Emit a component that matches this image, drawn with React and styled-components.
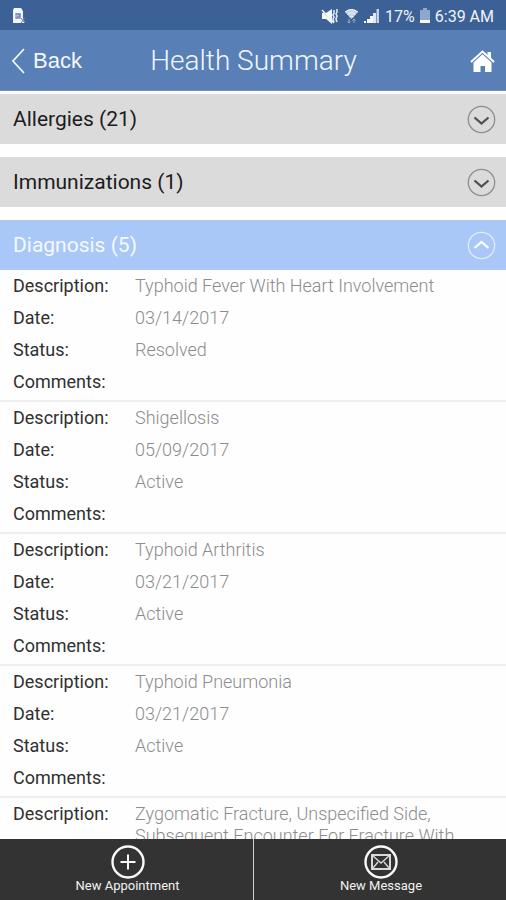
import React, { useState } from "react";
import styled, { createGlobalStyle } from "styled-components";

const GlobalStyle = createGlobalStyle`
  * { box-sizing: border-box; }
  body { margin: 0; background: #fff; font-family: Roboto, "Liberation Sans", sans-serif; }
  button { font: inherit; border: 0; background: none; padding: 0; cursor: pointer; }
`;

const Screen = styled.div`
  display: flex;
  flex-direction: column;
  height: 100vh;
  overflow: hidden;
  background: #fefefe;
`;

const StatusBar = styled.div`
  flex: none;
  display: flex;
  align-items: center;
  justify-content: space-between;
  height: 30px;
  padding: 2px 12px 0;
  background: #3b6197;
  color: #f0f4fa;
  font-size: 16px;
`;

const StatusItems = styled.div`
  display: flex;
  align-items: center;
  gap: 5px;
`;

const Header = styled.header`
  flex: none;
  display: grid;
  grid-template-columns: 1fr auto 1fr;
  align-items: center;
  height: 61px;
  padding: 2px 11px 0 12px;
  background: #5980b6;
  border-bottom: 1px solid #6f8fbf;
  color: #f2f6fc;
`;

const BackButton = styled.button`
  display: flex;
  align-items: center;
  gap: 8px;
  color: #f4f7fc;
  justify-self: start;

  && { font-family: "Liberation Sans", sans-serif; font-size: 22px; }
`;

const Title = styled.h1`
  margin: 0;
  font-size: 28px;
  font-weight: 300;
  line-height: 34px;
`;

const HomeLink = styled.a`
  display: flex;
  justify-self: end;
  color: #fff;
`;

const Content = styled.main`
  flex: 1;
  min-height: 0;
  overflow-y: auto;
  scrollbar-width: none;
  padding-top: 3px;
`;

const Section = styled.section`
  margin-bottom: 13px;
`;

const SectionButton = styled.button`
  display: flex;
  align-items: center;
  justify-content: space-between;
  width: 100%;
  height: 50px;
  padding: 0 10px 0 13px;
  background: ${(p) => (p.$open ? "#a9c8f7" : "#dbdbdb")};
  color: ${(p) => (p.$open ? "#f6f9ff" : "#1c1c1c")};

  && { font-size: 21px; }
`;

const Entry = styled.dl`
  margin: 0;
  padding: 0 13px 2px;
  border-bottom: 2px solid #efefef;
`;

const Field = styled.div`
  display: grid;
  grid-template-columns: 122px 1fr;
  padding: 5px 0;
  font-size: 18px;
  line-height: 22px;
`;

const Term = styled.dt`
  color: #303030;
`;

const Value = styled.dd`
  margin: 0;
  max-width: 340px;
  color: #8c8c8c;
  font-weight: 300;
`;

const BottomBar = styled.nav`
  flex: none;
  display: grid;
  grid-template-columns: 1fr 1fr;
  height: 61px;
  background: #333;
`;

const BottomButton = styled.button`
  display: flex;
  flex-direction: column;
  align-items: center;
  justify-content: flex-start;
  color: #f2f2f2;

  && { padding: 6px 0 0 2px; font-size: 13px; line-height: 14px; }
  & + & { border-left: 1px solid #d0d0d0; }
`;

const SimIcon = () => (
  <svg width="14" height="16" viewBox="0 0 14 16" aria-hidden="true">
    <path d="M2 0h7l2 3v7l2 5H1V2z" fill="#f2f5fa" />
    <path d="M3 5h6v6H3z" fill="#aab9d1" />
    <path d="M4 6h4v3H5v2M9 10l4 5M13 10l-4 5" stroke="#64799d" fill="none" />
  </svg>
);

const MuteIcon = () => (
  <svg width="18" height="17" viewBox="0 0 18 17" aria-hidden="true">
    <path d="M1 5h4l6-4v15l-6-5H1z" fill="#f3f6fb" />
    <path d="M0 2l13 13" stroke="#3b6197" strokeWidth="1" />
    <path d="M1 2l12 13" stroke="#f3f6fb" strokeWidth="1.500" />
    <path d="M13 2v3l-1 2 1 2-1 2 1 3M16 1v3l-1 2 1 2-1 3 1 3" stroke="#e2e8f2" strokeWidth="1.600" fill="none" />
  </svg>
);

const WifiIcon = () => (
  <svg width="15" height="17" viewBox="0 0 15 17" aria-hidden="true">
    <path d="M1 4Q7.500-2 14 4L7.500 11z" fill="#c6d3e5" />
    <path d="M1 4Q7.500-1 14 4M3.500 6.500Q7.500 3 11.500 6.500M5.500 9Q7.500 7 9.500 9" stroke="#f1f5fa" fill="none" />
    <path d="M5 11v4M3.500 13.500L5 15l1.500-1.500M10 15v-4M8.500 12.500L10 11l1.500 1.500" stroke="#9bb0cf" fill="none" />
  </svg>
);

const SignalIcon = () => (
  <svg width="16" height="16" viewBox="0 0 16 16" aria-hidden="true">
    <path d="M0 13h2v2H0zM3 11h3v4H3zM6 8h3v7H6z" fill="#f4f7fc" />
    <path d="M9 5h3v10H9z" fill="#e0e7f1" />
    <path d="M12.500 1h2.500v14h-2.500z" fill="#c6d3e6" />
  </svg>
);

const BatteryIcon = () => (
  <svg width="10" height="16" viewBox="0 0 10 16" aria-hidden="true">
    <path d="M3 0h4v2h3v13H0V2h3z" fill="#8ea7ca" />
    <path d="M0 12h10v3H0z" fill="#f4f7fc" />
  </svg>
);

const BackIcon = () => (
  <svg width="13" height="26" viewBox="0 0 13 26" fill="none" aria-hidden="true">
    <path d="M12 1L1 13l11 12" stroke="#f4f7fc" strokeWidth="1.700" />
  </svg>
);

const HomeIcon = () => (
  <svg width="25" height="23" viewBox="0 0 25 23" aria-hidden="true">
    <path d="M17.500 2H21v7l-3.500-3.500z" fill="currentColor" />
    <path d="M1 12L12.500 1.500 24 12" stroke="currentColor" strokeWidth="2" fill="none" />
    <path d="M3.500 12.500l9-8.300 9 8.300V22H15v-6h-4.500v6h-7z" fill="currentColor" />
  </svg>
);

const ToggleIcon = ({ open }) => (
  <svg width="29" height="29" viewBox="0 0 29 29" fill="none" aria-hidden="true">
    <circle cx="14.500" cy="14.500" r="13.200" stroke={open ? "#e0ecff" : "#8e8e8e"} strokeWidth="1.300" />
    {open ? (
      <path d="M7.500 17l7-6 7 6" stroke="#fff" strokeWidth="2.300" />
    ) : (
      <path d="M7.500 12.500l7 6 7-6" stroke="#505050" strokeWidth="2.300" />
    )}
  </svg>
);

const AddIcon = () => (
  <svg width="34" height="34" viewBox="0 0 34 34" fill="none" stroke="#fafafa" aria-hidden="true">
    <circle cx="17" cy="17" r="15.500" strokeWidth="2.400" />
    <path d="M17 9.500v15M9.500 17h15" strokeWidth="2" />
  </svg>
);

const MailIcon = () => (
  <svg width="34" height="34" viewBox="0 0 34 34" fill="none" aria-hidden="true">
    <circle cx="17" cy="17" r="15.500" stroke="#fafafa" strokeWidth="2.400" />
    <rect x="8" y="10" width="18" height="14" stroke="#d9d9d9" strokeWidth="2" />
    <path d="M8.500 10.500l8.500 7.500 8.500-7.500M9 23l5-6M25 23l-5-6" stroke="#d9d9d9" strokeWidth="1.400" />
  </svg>
);

const diagnoses = [
  ["Typhoid Fever With Heart Involvement", "03/14/2017", "Resolved", ""],
  ["Shigellosis", "05/09/2017", "Active", ""],
  ["Typhoid Arthritis", "03/21/2017", "Active", ""],
  ["Typhoid Pneumonia", "03/21/2017", "Active", ""],
  ["Zygomatic Fracture, Unspecified Side, Subsequent Encounter For Fracture With"],
];

const labels = ["Description:", "Date:", "Status:", "Comments:"];

function DiagnosisEntry({ values }) {
  return (
    <Entry>
      {values.map((value, i) => (
        <Field key={labels[i]}>
          <Term>{labels[i]}</Term>
          <Value>{value}</Value>
        </Field>
      ))}
    </Entry>
  );
}

function Accordion({ title, defaultOpen = false, children }) {
  const [open, setOpen] = useState(defaultOpen);
  return (
    <Section>
      <SectionButton type="button" $open={open} aria-expanded={open} onClick={() => setOpen(!open)}>
        {title}
        <ToggleIcon open={open} />
      </SectionButton>
      {open && children}
    </Section>
  );
}

export default function App() {
  return (
    <Screen>
      <GlobalStyle />
      <StatusBar>
        <SimIcon />
        <StatusItems>
          <MuteIcon />
          <WifiIcon />
          <SignalIcon />
          <span>17%</span>
          <BatteryIcon />
          <span>6:39 AM</span>
        </StatusItems>
      </StatusBar>
      <Header>
        <BackButton type="button">
          <BackIcon />
          Back
        </BackButton>
        <Title>Health Summary</Title>
        <HomeLink href="#home" aria-label="Home">
          <HomeIcon />
        </HomeLink>
      </Header>
      <Content>
        <Accordion title="Allergies (21)" />
        <Accordion title="Immunizations (1)" />
        <Accordion title="Diagnosis (5)" defaultOpen>
          {diagnoses.map((values) => (
            <DiagnosisEntry key={values[0]} values={values} />
          ))}
        </Accordion>
      </Content>
      <BottomBar>
        <BottomButton type="button">
          <AddIcon />
          New Appointment
        </BottomButton>
        <BottomButton type="button">
          <MailIcon />
          New Message
        </BottomButton>
      </BottomBar>
    </Screen>
  );
}
